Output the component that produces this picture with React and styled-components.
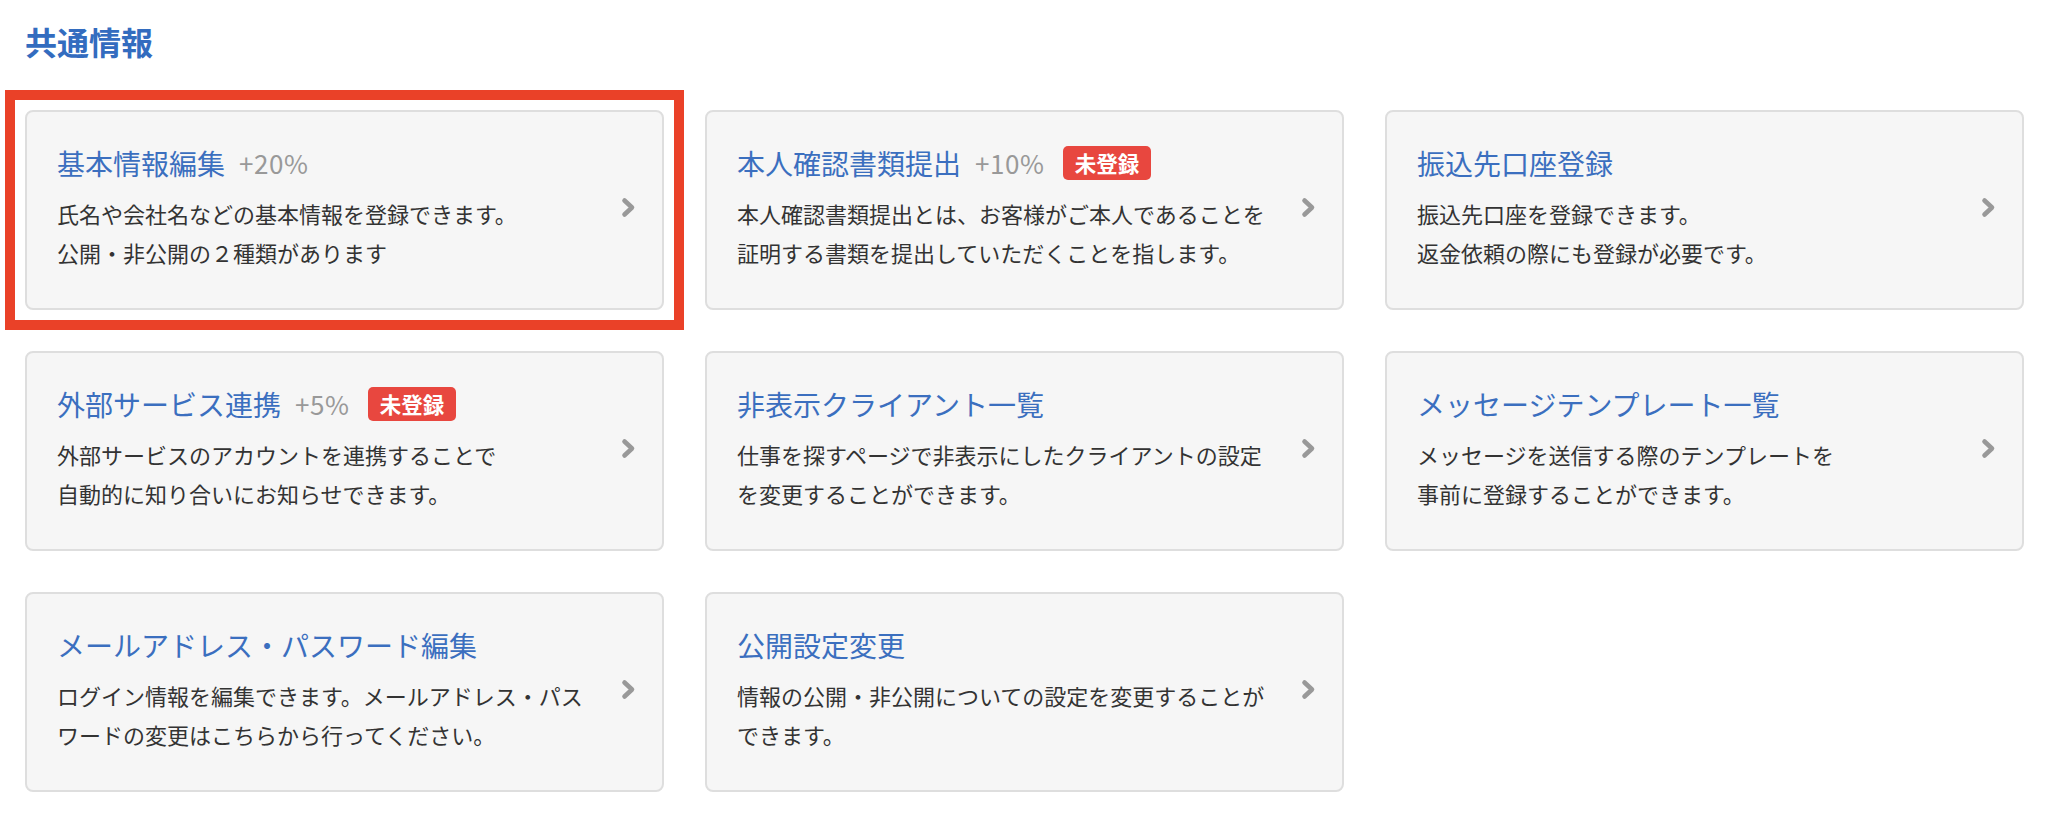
import React from 'react';
import styled, { createGlobalStyle } from 'styled-components';

const GlobalStyle = createGlobalStyle`
  html, body {
    margin: 0;
    padding: 0;
    background: #fff;
  }
  body {
    font-family: "Noto Sans CJK JP", "Noto Sans", sans-serif;
    color: #333;
  }
`;

const Page = styled.div`
  padding: 18px 31px 30px 25px;
`;

const Heading = styled.h2`
  margin: 0 0 46px;
  font-size: 32px;
  line-height: 46px;
  font-weight: 700;
  color: #336cbf;
`;

const Grid = styled.div`
  display: grid;
  grid-template-columns: repeat(3, 639px);
  grid-auto-rows: 200px;
  column-gap: 41px;
  row-gap: 41px;
`;

const Card = styled.a`
  position: relative;
  box-sizing: border-box;
  display: flex;
  align-items: center;
  padding: 0 26px 6px 30px;
  background: #f6f6f6;
  border: 2px solid #dedede;
  border-radius: 8px;
  text-decoration: none;
  cursor: pointer;

  ${(p) =>
    p.$selected &&
    `
    &::before {
      content: '';
      position: absolute;
      top: -22px;
      left: -22px;
      right: -22px;
      bottom: -22px;
      border: 10px solid #ea4128;
      pointer-events: none;
    }
  `}
`;

const CardBody = styled.div`
  flex: 1;
  min-width: 0;
`;

const TitleRow = styled.div`
  display: flex;
  align-items: center;
  margin-bottom: 10px;
`;

const Title = styled.span`
  font-size: 28px;
  line-height: 42px;
  color: #3b6fbf;
`;

const Rate = styled.span`
  margin-left: 14px;
  font-size: 26px;
  letter-spacing: 0.6px;
  line-height: 42px;
  color: #999;
`;

const Badge = styled.span`
  margin-left: 18px;
  padding: 0 12px;
  height: 34px;
  line-height: 34px;
  font-size: 21.5px;
  font-weight: 700;
  color: #fff;
  background: #e8473f;
  border-radius: 5px;
`;

const Description = styled.p`
  margin: 0;
  font-size: 22px;
  line-height: 39px;
  color: #333;
`;

const Chevron = styled.svg`
  flex: none;
  width: 15px;
  height: 21px;
  margin-left: 16px;
`;

const items = [
  {
    title: '基本情報編集',
    rate: '+20%',
    lines: ['氏名や会社名などの基本情報を登録できます。', '公開・非公開の２種類があります'],
    selected: true,
  },
  {
    title: '本人確認書類提出',
    rate: '+10%',
    badge: true,
    lines: ['本人確認書類提出とは、お客様がご本人であることを', '証明する書類を提出していただくことを指します。'],
  },
  {
    title: '振込先口座登録',
    lines: ['振込先口座を登録できます。', '返金依頼の際にも登録が必要です。'],
  },
  {
    title: '外部サービス連携',
    rate: '+5%',
    badge: true,
    lines: ['外部サービスのアカウントを連携することで', '自動的に知り合いにお知らせできます。'],
  },
  {
    title: '非表示クライアント一覧',
    lines: ['仕事を探すページで非表示にしたクライアントの設定', 'を変更することができます。'],
  },
  {
    title: 'メッセージテンプレート一覧',
    lines: ['メッセージを送信する際のテンプレートを', '事前に登録することができます。'],
  },
  {
    title: 'メールアドレス・パスワード編集',
    lines: ['ログイン情報を編集できます。メールアドレス・パス', 'ワードの変更はこちらから行ってください。'],
  },
  {
    title: '公開設定変更',
    lines: ['情報の公開・非公開についての設定を変更することが', 'できます。'],
  },
];

function ArrowRight() {
  return (
    <Chevron viewBox="0 0 15 21">
      <polyline
        points="3.5,3.5 11,10.5 3.5,17.5"
        fill="none"
        stroke="#999"
        strokeWidth="4.6"
        strokeLinecap="round"
        strokeLinejoin="round"
      />
    </Chevron>
  );
}

function SettingCard({ item }) {
  return (
    <Card $selected={item.selected}>
      <CardBody>
        <TitleRow>
          <Title>{item.title}</Title>
          {item.rate && <Rate>{item.rate}</Rate>}
          {item.badge && <Badge>未登録</Badge>}
        </TitleRow>
        <Description>
          {item.lines.map((line, i) => (
            <React.Fragment key={i}>
              {i > 0 && <br />}
              {line}
            </React.Fragment>
          ))}
        </Description>
      </CardBody>
      <ArrowRight />
    </Card>
  );
}

export default function App() {
  return (
    <>
      <GlobalStyle />
      <Page>
        <Heading>共通情報</Heading>
        <Grid>
          {items.map((item) => (
            <SettingCard key={item.title} item={item} />
          ))}
        </Grid>
      </Page>
    </>
  );
}
